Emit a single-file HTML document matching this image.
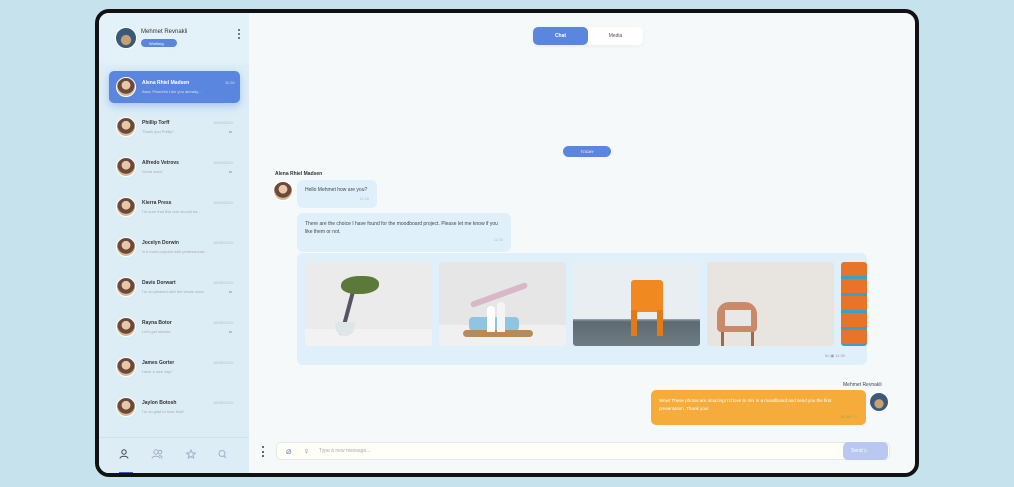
<!DOCTYPE html>
<html><head><meta charset="utf-8"><style>
*{margin:0;padding:0;box-sizing:border-box}
body{width:1014px;height:487px;background:#c6e2ec;font-family:"Liberation Sans",sans-serif;position:relative;overflow:hidden}
.a{position:absolute}
.frame{left:95px;top:9px;width:824px;height:468px;border:4px solid #111;border-radius:14px;background:#f6f9fa;overflow:hidden}
.side{left:0;top:0;width:150px;height:100%;background:#dff0f8}
.av{position:absolute;width:18px;height:18px;border-radius:50%;background:radial-gradient(circle at 50% 40%,#e8c8a8 0 30%,#6b4a3a 32% 60%,#d9b89a 62%);border:1.5px solid #fff}
.nm{position:absolute;font-size:5px;font-weight:bold;color:#333}
.ms{position:absolute;font-size:4px;color:#aab}
.tm{position:absolute;font-size:4px;color:#bbb}
.bub{position:absolute;background:#dff0fa;border-radius:6px;font-size:5px;color:#445;padding:7px 8px}
.img{position:absolute;top:9px;height:84px;border-radius:3px;overflow:hidden}
</style></head><body>
<div class="a frame">
 <div class="a side">
  <div class="a" style="left:0;top:0;width:150px;height:48px;background:#e3f2f9"></div>
  <div class="av" style="left:16px;top:14px;width:22px;height:22px;background:radial-gradient(circle at 50% 60%,#c9a070 0 30%,#3b5a7a 35%)"></div>
  <div class="nm" style="left:42px;top:16px;font-weight:normal;font-size:6px;color:#333">Mehmet Revnakli</div>
  <div class="a" style="left:42px;top:26px;width:36px;height:8px;border-radius:4px;background:#5b86e0;font-size:4px;color:#fff;padding:2px 0 0 8px">Working</div>
  <div class="a" style="left:139px;top:16px;width:2px;height:10px;border-left:2px dotted #777"></div>
  <div class="a" style="left:0;top:52px;width:150px;height:372px;background:#dcedf6"></div>
  <div class="a" style="left:10px;top:58px;width:131px;height:32px;background:#5b86e0;border-radius:5px;box-shadow:0 3px 8px rgba(91,134,224,.4)"></div>
  <div class="av" style="left:17px;top:64px;width:20px;height:20px"></div>
  <div class="nm" style="left:43px;top:67px;color:#fff">Alena Rhiel Madsen</div>
  <div class="ms" style="left:43px;top:76px;color:#dde">Aww, Peaceful Like you already...</div>
  <div class="tm" style="left:126px;top:67px;color:#dde">11:30</div>
  <div id="list"></div>
  <div class="a" style="left:0;top:424px;width:150px;height:36px;background:#dcedf6;border-top:1px solid #cfe3ee"></div>
  <svg class="a" style="left:20px;top:436px" width="110" height="10" viewBox="0 0 110 10" fill="none" stroke-width="1"><g stroke="#445"><circle cx="5" cy="3" r="2.2"/><path d="M1 9.5c0-3 8-3 8 0"/></g><g stroke="#aac"><circle cx="37" cy="3" r="2.2"/><circle cx="41" cy="3" r="1.8"/><path d="M33 9.5c0-3 8-3 8 0M40 6.5c2 0 3 1 3 3"/><path d="M72 1l1.3 2.8 3 .3-2.3 2 .7 3-2.7-1.6-2.7 1.6.7-3-2.3-2 3-.3z"/><circle cx="103" cy="4.5" r="3"/><path d="M105 7l2 2"/></g></svg>
  <div class="a" style="left:20px;top:459px;width:14px;height:2px;background:#3a5ac8"></div>
 </div>
 <div class="a" style="left:434px;top:14px;width:110px;height:18px;border-radius:5px;background:#fff;box-shadow:0 1px 4px rgba(0,0,0,.06)"></div>
 <div class="a" style="left:434px;top:14px;width:55px;height:18px;border-radius:5px;background:#5b86e0;color:#fff;font-size:5px;font-weight:bold;text-align:center;line-height:18px">Chat</div>
 <div class="a" style="left:489px;top:14px;width:55px;height:18px;color:#555;font-size:5px;text-align:center;line-height:18px">Media</div>
 <div class="a" style="left:464px;top:133px;width:48px;height:11px;border-radius:6px;background:#5b86e0;color:#fff;font-size:4px;text-align:center;line-height:11px">TODAY</div>
 <div class="nm" style="left:176px;top:158px">Alena Rhiel Madsen</div>
 <div class="av" style="left:174px;top:168px;width:20px;height:20px"></div>
 <div class="bub" style="left:198px;top:167px;width:80px;height:28px">Hello Mehmet how are you?<div style="text-align:right;font-size:4px;color:#bbb;margin-top:3px">11:30</div></div>
 <div class="bub" style="left:198px;top:200px;width:214px;height:39px;line-height:8px">There are the choice I have found for the moodboard project. Please let me know if you like them or not.<div style="text-align:right;font-size:4px;color:#bbb">11:30</div></div>
 <div class="a" style="left:198px;top:240px;width:570px;height:112px;background:#dff0fa;border-radius:6px;overflow:hidden">
  <div class="img" style="left:8px;width:127px;background:linear-gradient(#ebebeb 80%,#f2f2f2 80%)"><div class="a" style="left:40px;top:30px;width:4px;height:44px;background:#556;transform:rotate(15deg)"></div><div class="a" style="left:36px;top:14px;width:38px;height:18px;background:#5b7a3a;border-radius:50% 40% 50% 40%"></div><div class="a" style="left:30px;top:60px;width:20px;height:14px;border-radius:0 0 10px 10px;background:#dfe6e8"></div></div>
  <div class="img" style="left:142px;width:127px;background:linear-gradient(#e6e6e6 75%,#f0f0f0 75%)"><div class="a" style="left:30px;top:55px;width:50px;height:14px;background:#8fc5e0;border-radius:4px"></div><div class="a" style="left:24px;top:68px;width:70px;height:7px;background:#b88a5a;border-radius:4px"></div><div class="a" style="left:48px;top:44px;width:8px;height:26px;background:#fff;border-radius:4px 4px 0 0"></div><div class="a" style="left:58px;top:40px;width:8px;height:30px;background:#f5f5f5;border-radius:4px 4px 0 0"></div><div class="a" style="left:30px;top:30px;width:60px;height:6px;background:#d8b8c8;border-radius:3px;transform:rotate(-20deg)"></div></div>
  <div class="img" style="left:276px;width:127px;background:linear-gradient(#e8eef2 68%,#9aa6ae 68%,#5e6a72 71%,#6f7c84)"><div class="a" style="left:58px;top:18px;width:32px;height:32px;background:#f08a20;border-radius:3px"></div><div class="a" style="left:58px;top:48px;width:6px;height:26px;background:#e37a15"></div><div class="a" style="left:84px;top:48px;width:6px;height:26px;background:#e37a15"></div></div>
  <div class="img" style="left:410px;width:127px;background:#e8e5e0"><div class="a" style="left:10px;top:40px;width:40px;height:30px;background:#c98a6a;border-radius:12px 12px 4px 4px"></div><div class="a" style="left:18px;top:48px;width:26px;height:16px;background:#e8e8e8"></div><div class="a" style="left:14px;top:70px;width:3px;height:14px;background:#a06a4a"></div><div class="a" style="left:44px;top:70px;width:3px;height:14px;background:#a06a4a"></div></div>
  <div class="img" style="left:544px;width:26px;background:repeating-linear-gradient(#e8742a 0 14px,#3aa0c8 14px 17px)"></div>
  <div class="tm" style="left:528px;top:100px;color:#99a">5x ▣ 11:30</div>
 </div>
 <div class="a" style="left:744px;top:369px;font-size:5px;color:#445">Mehmet Revnakli</div>
 <div class="a" style="left:552px;top:377px;width:215px;height:35px;background:#f5ac3a;border-radius:5px;font-size:4.5px;color:#fff;padding:7px 8px;line-height:8px">Wow! These photos are amazing! I'd love to mix in a moodboard and send you the first presentation. Thank you!<div style="text-align:right;font-size:4px;color:#6b4">11:30 ✓✓</div></div>
 <div class="av" style="left:770px;top:379px;width:20px;height:20px;background:radial-gradient(circle at 50% 60%,#c9a070 0 30%,#3b5a7a 35%)"></div>
 <div class="a" style="left:163px;top:433px;width:2px;height:11px;border-left:2px dotted #667"></div>
 <div class="a" style="left:177px;top:429px;width:614px;height:18px;background:#fffef7;border:1px solid #e6e9ea;border-radius:5px"></div>
 <div class="a" style="left:187px;top:433px;font-size:9px;color:#6a82c8">⌀</div>
 <div class="a" style="left:204px;top:433px;font-size:9px;color:#6a82c8">♀</div>
 <div class="a" style="left:220px;top:435px;font-size:5px;color:#aab">Type a new message...</div>
 <div class="a" style="left:744px;top:429px;width:45px;height:18px;background:#b8c8f0;border-radius:5px;color:#fff;font-size:5px;padding:6px 0 0 8px">Send ▷</div>
</div>
<script>
var d=[["Phillip Torff","Thank you Phillip!","11/08/2020",1],["Alfredo Vetrovs","Great work!","11/08/2020",1],["Kierra Press","I'm sure that this one should be...","11/08/2020",0],["Jocelyn Dorwin","Is it more popular with professional...","16/08/2020",0],["Davis Dorwart","I'm so pleased with the whole work","16/08/2020",1],["Rayna Botor","Let's get started.","16/08/2020",1],["James Gorter","Have a nice day!","16/08/2020",0],["Jaylon Botosh","I'm so glad to hear that!","16/08/2020",0]];
var h="";d.forEach(function(r,i){var y=104+i*40;h+='<div class="av" style="left:17px;top:'+(y)+'px;width:20px;height:20px"></div><div class="nm" style="left:43px;top:'+(y+3)+'px">'+r[0]+'</div><div class="ms" style="left:43px;top:'+(y+12)+'px">'+r[1]+'</div><div class="tm" style="left:114px;top:'+(y+3)+'px">'+r[2]+'</div>'+(r[3]?'<div class="tm" style="left:130px;top:'+(y+12)+'px;color:#556">••</div>':'')});
document.getElementById("list").innerHTML=h;
</script>
</body></html>
